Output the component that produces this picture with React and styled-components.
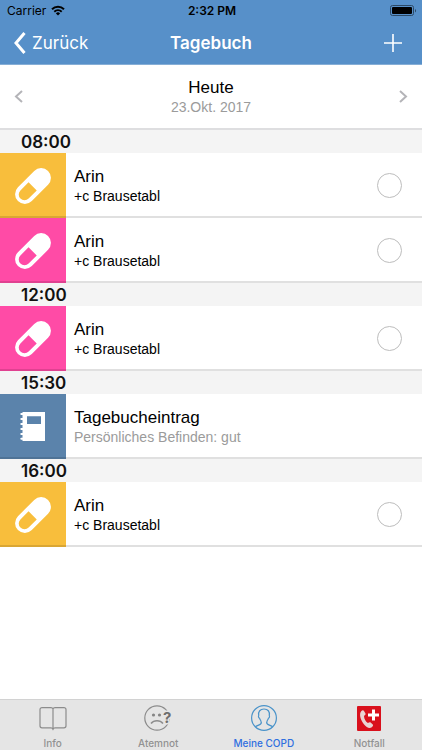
import React, { useState } from "react";
import styled, { createGlobalStyle, ThemeProvider } from "styled-components";

const theme = {
  colors: {
    primary: "#5790c9",
    active: "#2f6fe0",
    text: "#000",
    muted: "#9b9b9b",
    section: "#f4f4f4",
    tabBar: "#e5e5e5",
    yellow: "#f8be3c",
    pink: "#ff4ba6",
    blue: "#5b83ab",
  },
  fonts: {
    system: `Inter, "Liberation Sans", sans-serif`,
    content: `"Liberation Sans", Arial, sans-serif`,
  },
};

const GlobalStyle = createGlobalStyle`
  * {
    box-sizing: border-box;
    margin: 0;
    padding: 0;
  }
  body {
    background-color: #fff;
    font-family: ${theme.fonts.content};
  }
  button {
    border: none;
    background: none;
    color: inherit;
    font: inherit;
    cursor: pointer;
  }
  svg {
    display: block;
    flex-shrink: 0;
  }
`;

const Screen = styled.div`
  display: flex;
  flex-direction: column;
  min-height: 100vh;
`;

const Header = styled.header`
  background-color: ${({ theme }) => theme.colors.primary};
  font-family: ${({ theme }) => theme.fonts.system};
  border-bottom: 1px solid #86aed6;
`;

const StatusBar = styled.div`
  display: grid;
  grid-template-columns: 1fr auto 1fr;
  align-items: center;
  height: 21px;
  padding: 0 5px 0 7px;
  font-size: 12px;
  line-height: 21px;
  .carrier {
    display: flex;
    align-items: center;
    gap: 5px;
  }
  .time {
    font-weight: 600;
  }
  .battery {
    justify-self: end;
  }
`;

const NavBar = styled.nav`
  display: grid;
  grid-template-columns: 1fr auto 1fr;
  align-items: center;
  height: 43px;
  padding: 0 13px;
  color: #fff;
  font-size: 17px;
  line-height: 22px;
  h1 {
    font-size: 17px;
    font-weight: 600;
  }
  .back {
    display: flex;
    align-items: center;
    justify-self: start;
    gap: 6px;
  }
  .add {
    justify-self: end;
    padding-right: 7px;
  }
`;

const DateBar = styled.div`
  display: flex;
  align-items: center;
  justify-content: space-between;
  height: 65px;
  padding: 0 14px;
  border-bottom: 2px solid #dedee0;
  color: #b4b4b8;
  .date {
    text-align: center;
  }
`;

const Title = styled.p`
  color: ${({ theme }) => theme.colors.text};
  font-size: 17px;
  line-height: 20px;
`;

const Subtitle = styled.p`
  color: ${({ theme, $muted }) =>
    $muted ? theme.colors.muted : theme.colors.text};
  font-size: 14px;
  line-height: 18px;
`;

const Diary = styled.main`
  flex: 1;
`;

const TimeHeading = styled.h2`
  height: 23px;
  padding-left: 21px;
  background-color: ${({ theme }) => theme.colors.section};
  color: #111;
  font-family: ${({ theme }) => theme.fonts.system};
  font-size: 17px;
  font-weight: 600;
  line-height: 24px;
`;

const Row = styled.label`
  position: relative;
  display: flex;
  align-items: center;
  height: 65px;
  padding-right: 20px;
  /* divider runs over the coloured tile as well */
  &::after {
    content: "";
    position: absolute;
    left: 0;
    right: 0;
    bottom: 0;
    height: 2px;
    background-color: rgb(0 0 0 / 12%);
  }
  .text {
    flex: 1;
    padding: 0 8px;
  }
`;

const Tile = styled.div`
  display: flex;
  align-items: center;
  justify-content: center;
  width: 66px;
  height: 100%;
  background-color: ${({ theme, $color }) => theme.colors[$color]};
  color: ${({ theme, $color }) => theme.colors[$color]};
`;

const Check = styled.input`
  appearance: none;
  width: 25px;
  height: 25px;
  border: 1px solid #bdbdbd;
  border-radius: 50%;
  cursor: pointer;
  &:checked {
    background-color: ${({ theme }) => theme.colors.primary};
  }
`;

const TabBar = styled.nav`
  position: sticky;
  bottom: 0;
  display: grid;
  grid-template-columns: repeat(4, 1fr);
  height: 51px;
  border-top: 1px solid #d2d2d2;
  background-color: ${({ theme }) => theme.colors.tabBar};
`;

const Tab = styled.button`
  display: flex;
  flex-direction: column;
  align-items: center;
  padding-top: 5px;
  gap: 5px;
  && {
    color: ${({ theme, $active }) =>
      $active ? theme.colors.active : "#929292"};
    font-family: ${({ theme }) => theme.fonts.system};
    font-size: 10px;
    font-weight: 500;
    line-height: 14px;
  }
`;

const WifiIcon = () => (
  <svg width="14" height="11" viewBox="0 0 14 11" fill="none" stroke="#000">
    <path d="M1 4.2a8.6 8.6 0 0 1 12 0" strokeWidth="2" />
    <path d="M3.3 6.7a5.3 5.3 0 0 1 7.4 0" strokeWidth="1.9" />
    <path d="M7 10.6 4.9 8.4a3 3 0 0 1 4.2 0Z" fill="#000" stroke="none" />
  </svg>
);

const BatteryIcon = () => (
  <svg className="battery" width="27" height="12" viewBox="0 0 27 12">
    <rect x="0.5" y="0.5" width="23" height="10" rx="2" fill="none" stroke="#2c4965" />
    <rect x="2" y="2" width="20" height="7" rx="1" />
    <path d="M25 4v3.4c1.4-.5 1.4-2.9 0-3.4Z" fill="#2c4965" />
  </svg>
);

const Chevron = ({ width, height, stroke, right }) => (
  <svg width={width} height={height} fill="none" stroke="currentColor" strokeWidth={stroke}>
    <path
      d={
        right
          ? `M${stroke / 2} 1L${width - stroke} ${height / 2}L${stroke / 2} ${height - 1}`
          : `M${width - stroke / 2} 1L${stroke} ${height / 2}L${width - stroke / 2} ${height - 1}`
      }
    />
  </svg>
);

const PlusIcon = () => (
  <svg width="18" height="18" viewBox="0 0 18 18" stroke="#fff" strokeWidth="1.6">
    <path d="M9 0v18M0 9h18" />
  </svg>
);

const PillIcon = () => (
  <svg width="38" height="38" viewBox="0 0 38 38">
    <g transform="rotate(-45 19 19)">
      <rect x="-2.3" y="9.2" width="42.6" height="19.6" rx="9.8" fill="#fff" />
      <path d="M18.5 13.2H7a5.800 5.800 0 0 0 0 11.600H18.500Z" fill="currentColor" />
    </g>
  </svg>
);

const NotebookIcon = () => (
  <svg width="26" height="29" viewBox="0 0 26 29" fill="#fff">
    <path
      fillRule="evenodd"
      d="M2.500 0H25v29H2.500v-1.300H1.300a1 1 0 0 1 0-2h1.200v-2.600H1.300a1 1 0 0 1 0-2h1.200v-3H1.300a1 1 0 0 1 0-2h1.200v-3H1.300a1 1 0 0 1 0-2h1.200v-3H1.300a1 1 0 0 1 0-2h1.200v-3H1.300a1 1 0 0 1 0-2h1.200ZM7 4.300v7.700h14V4.300Z"
    />
  </svg>
);

const BookIcon = () => (
  <svg width="28" height="26" viewBox="0 0 28 26" fill="none" stroke="#8c8c8c" strokeWidth="1.2">
    <path d="M14 3v22M14 3.800c-.3-.8-1-1.200-2-1.200H3a2 2 0 0 0-2 2v16.200a2 2 0 0 0 2 2h9c1 0 1.700.4 2 1.200.3-.8 1-1.200 2-1.200h9a2 2 0 0 0 2-2V4.600a2 2 0 0 0-2-2h-9c-1 0-1.700.4-2 1.200" />
  </svg>
);

const SadIcon = () => (
  <svg width="34" height="26" viewBox="0 0 34 26" fill="none" stroke="#8c8c8c">
    <circle cx="16" cy="13" r="12.2" strokeWidth="1.2" />
    <circle cx="12.5" cy="10" r="1.6" fill="#858585" stroke="none" />
    <circle cx="18.5" cy="10" r="1.6" fill="#858585" stroke="none" />
    <path d="M10 18.500c3-3.600 9-3.600 12 0" strokeWidth="1.6" />
    <text
      x="22"
      y="18"
      fill="#6e6e6e"
      stroke="#e5e5e5"
      strokeWidth="3"
      paintOrder="stroke"
      fontFamily="Inter, sans-serif"
      fontSize="15"
      fontWeight="700"
    >
      ?
    </text>
  </svg>
);

const PersonIcon = () => (
  <svg width="28" height="26" viewBox="0 0 28 26" fill="none" stroke="#4a93c9" strokeWidth="1.2">
    <circle cx="14" cy="13" r="12.4" />
    <path d="M5.300 21.700c1.500-1.200 4.200-1.600 5.300-2.700.8-.9.700-2.500.1-3.500-.5-.8-.9-1.200-1.200-2.300-.9-.2-1.300-1.900-.8-2.700-.6-4 1.400-6.500 5.300-6.500s5.900 2.500 5.300 6.500c.5.8.1 2.500-.8 2.700-.3 1.100-.7 1.500-1.200 2.300-.6 1-.7 2.600.1 3.500 1.100 1.100 3.800 1.500 5.300 2.700" />
  </svg>
);

const EmergencyIcon = () => (
  <svg width="26" height="26" viewBox="0 0 26 26">
    <rect x="1" y="1" width="24" height="25" rx="1" fill="#d9101c" />
    <path
      d="M5.200 6.200c1-.9 2.100-1.200 2.800-.3l1.500 2.700c.4.900-.4 1.500-1.500 2.300.2 3 1.500 5.400 3.900 7.200 1.200-.7 2-1.200 2.700-.6l2.200 2.100c.7.900.1 1.800-1 2.700-2.400 1.500-5.300.3-7.900-3.100C4.500 15 2.800 8.800 5.200 6.200Z"
      fill="#e9d3d3"
    />
    <path d="M17.500 4.500v11M12 10h11" stroke="#fff" strokeWidth="3" />
  </svg>
);

const sections = [
  {
    time: "08:00",
    entries: [
      { type: "pill", color: "yellow", title: "Arin", text: "+c Brausetabl" },
      { type: "pill", color: "pink", title: "Arin", text: "+c Brausetabl" },
    ],
  },
  {
    time: "12:00",
    entries: [{ type: "pill", color: "pink", title: "Arin", text: "+c Brausetabl" }],
  },
  {
    time: "15:30",
    entries: [
      {
        type: "note",
        color: "blue",
        title: "Tagebucheintrag",
        text: "Persönliches Befinden: gut",
      },
    ],
  },
  {
    time: "16:00",
    entries: [{ type: "pill", color: "yellow", title: "Arin", text: "+c Brausetabl" }],
  },
];

const tabs = [
  { label: "Info", icon: <BookIcon /> },
  { label: "Atemnot", icon: <SadIcon /> },
  { label: "Meine COPD", icon: <PersonIcon /> },
  { label: "Notfall", icon: <EmergencyIcon /> },
];

const Entry = ({ type, color, title, text }) => {
  const isNote = type === "note";
  return (
    <Row as={isNote ? "div" : "label"}>
      <Tile $color={color}>{isNote ? <NotebookIcon /> : <PillIcon />}</Tile>
      <div className="text">
        <Title>{title}</Title>
        <Subtitle $muted={isNote}>{text}</Subtitle>
      </div>
      {!isNote && <Check type="checkbox" />}
    </Row>
  );
};

const App = () => {
  const [activeTab, setActiveTab] = useState("Meine COPD");

  return (
    <ThemeProvider theme={theme}>
      <GlobalStyle />
      <Screen>
        <Header>
          <StatusBar>
            <div className="carrier">
              Carrier
              <WifiIcon />
            </div>
            <span className="time">2:32 PM</span>
            <BatteryIcon />
          </StatusBar>
          <NavBar>
            <button className="back">
              <Chevron width={13} height={22} stroke={3} />
              Zurück
            </button>
            <h1>Tagebuch</h1>
            <button className="add" aria-label="Hinzufügen">
              <PlusIcon />
            </button>
          </NavBar>
        </Header>
        <DateBar>
          <button aria-label="Vorheriger Tag">
            <Chevron width={9} height={13} stroke={2} />
          </button>
          <div className="date">
            <Title>Heute</Title>
            <Subtitle $muted>23.Okt. 2017</Subtitle>
          </div>
          <button aria-label="Nächster Tag">
            <Chevron width={9} height={13} stroke={2} right />
          </button>
        </DateBar>
        <Diary>
          {sections.map((section) => (
            <section key={section.time}>
              <TimeHeading>{section.time}</TimeHeading>
              {section.entries.map((entry, index) => (
                <Entry key={index} {...entry} />
              ))}
            </section>
          ))}
        </Diary>
        <TabBar>
          {tabs.map(({ label, icon }) => (
            <Tab
              key={label}
              $active={label === activeTab}
              onClick={() => setActiveTab(label)}
            >
              {icon}
              {label}
            </Tab>
          ))}
        </TabBar>
      </Screen>
    </ThemeProvider>
  );
};

export default App;
